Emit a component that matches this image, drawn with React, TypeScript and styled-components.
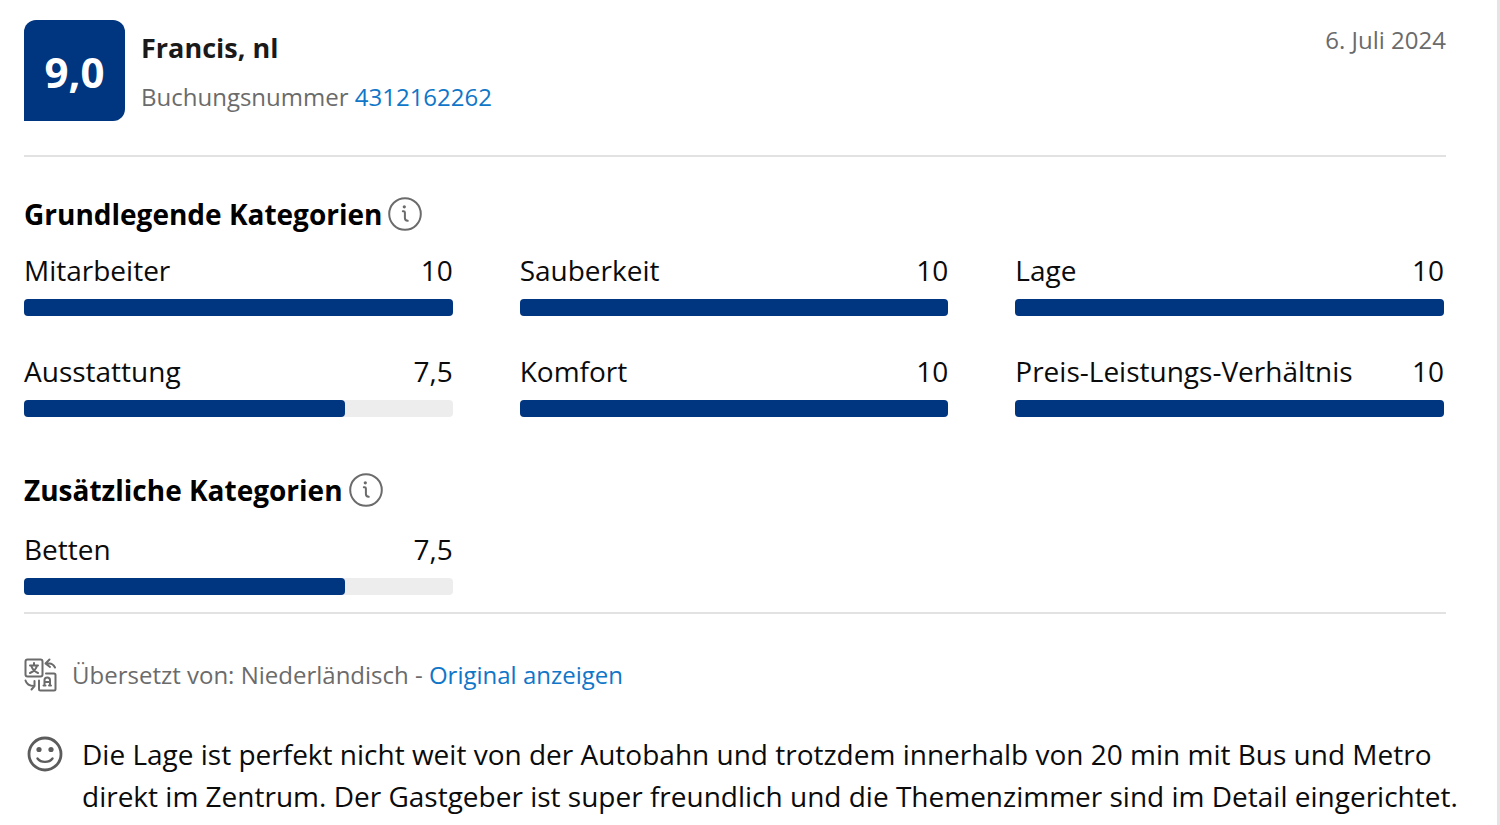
import React from "react";
import styled, { createGlobalStyle } from "styled-components";

const GlobalStyle = createGlobalStyle`
  * { box-sizing: border-box; }
  html { background: #fff; }
  body {
    margin: 0;
    overflow-x: hidden;
    font-family: "Segoe UI", "Open Sans", "Noto Sans", sans-serif;
    font-size: 28px;
    line-height: 42px;
    color: #0b0b0b;
  }
`;

const Card = styled.article`
  min-height: 100vh;
  padding: 20px 51px 7px 24px;
  border-right: 3px solid #e4e4e4;
`;

const Header = styled.header`
  display: flex;
  align-items: flex-start;
  gap: 16px;
  padding-bottom: 34px;
  border-bottom: 2px solid #e2e2e2;
`;

const Score = styled.div`
  display: flex;
  flex: none;
  align-items: center;
  justify-content: center;
  width: 101px;
  height: 101px;
  padding-top: 3px;
  border-radius: 12px 12px 12px 0;
  background: #003580;
  color: #fff;
  font-size: 42px;
  font-weight: 700;
`;

const Guest = styled.div`
  flex: 1;
  padding-top: 7px;
`;

const Name = styled.h2`
  margin: 0;
  padding-bottom: 8px;
  font-size: 27px;
  font-weight: 700;
  line-height: 42px;
  color: #1a1a1a;
`;

const Muted = styled.p`
  margin: 0;
  font-size: 24px;
  line-height: 40px;
  color: #6b6b6b;
`;

const Posted = styled.time`
  font-size: 24px;
  line-height: 40px;
  color: #6b6b6b;
`;

const Link = styled.a`
  color: #0f76c8;
  text-decoration: none;
`;

const Section = styled.section<{ $top: number; $gap: number }>`
  display: flex;
  flex-direction: column;
  gap: ${(p) => p.$gap}px;
  padding-top: ${(p) => p.$top}px;
`;

const SectionHead = styled.div`
  display: flex;
  align-items: center;
  gap: 6px;
  height: 34px;
`;

const SectionTitle = styled.h3`
  margin: 0;
  font-size: 28px;
  font-weight: 700;
  color: #000;
`;

const InfoButton = styled.button`
  display: flex;
  padding: 0;
  border: 0;
  background: none;
  color: #6b6b6b;
  cursor: pointer;
`;

const RatingGrid = styled.div`
  display: grid;
  grid-template-columns: repeat(3, 1fr);
  gap: 35px 67px;
  padding-right: 2px;
`;

const RatingItem = styled.div`
  display: flex;
  flex-direction: column;
  gap: 9px;
`;

const RatingLabel = styled.div`
  display: flex;
  justify-content: space-between;
  line-height: 40px;
  white-space: nowrap;
`;

const Track = styled.div`
  height: 17px;
  border-radius: 4px;
  background: #ededed;
`;

const Fill = styled.div`
  height: 100%;
  border-radius: 4px;
  background: #003580;
`;

const Divider = styled.hr`
  height: 2px;
  margin: 17px 0 44px;
  border: 0;
  background: #e2e2e2;
`;

const Translation = styled.div`
  display: flex;
  align-items: center;
  gap: 15px;
  height: 34px;
`;

const Comment = styled.div`
  display: flex;
  gap: 19px;
  margin-right: -24px;
  padding: 41px 0 0 3px;
`;

const CommentIcon = styled.span`
  display: flex;
  flex: none;
  padding-top: 3px;
  color: #5c5c5c;
`;

const CommentText = styled.p`
  margin: 0;
`;

const InfoIcon = () => (
  <svg width="34" height="34" viewBox="0 0 34 34" fill="none" stroke="currentColor" aria-hidden="true">
    <circle cx="17" cy="17" r="15.8" strokeWidth="2" />
    <circle cx="16.300" cy="9.800" r="1.600" fill="currentColor" stroke="none" />
    <path d="M14.800 14.200h.8c.8 0 1.300.5 1.300 1.300v5.500c0 1.700.8 2.600 2.800 2.800" strokeWidth="2" strokeLinecap="round" />
  </svg>
);

const TranslateIcon = () => (
  <svg width="33" height="34" viewBox="0 0 33 34" fill="none" stroke="#6b6b6b" strokeWidth="2" strokeLinecap="round" strokeLinejoin="round" aria-hidden="true">
    <rect x="1.500" y="1.500" width="17" height="17" rx="2" />
    <path d="M6 7.500h8M10 5v2.500M13 7.800c-.8 3-3 5.500-7 7.200M7.500 8.500c1 2.800 3 5 6.500 6.500" />
    <path d="M22 15.500h8c1 0 1.500.6 1.500 1.500v14c0 1-.5 1.500-1.500 1.500H16.500c-1 0-1.500-.5-1.500-1.500v-8.500" />
    <path d="M20.500 27.500v-5.500c0-1.500 1-2.500 2.700-2.500s2.800 1 2.800 2.500v5.500M20.500 24h5.500M19.500 27.500h2M25 27.500h2" />
    <path d="M25.500 1.500l-4 4 4.500 3.500M22 5.500h3.500c2.500 0 4 1.200 5.500 4" />
    <path d="M1.500 22.500c1 3.500 3 5.500 8.500 5.500M7.500 31.500l3-3.500v-5" />
  </svg>
);

const SmileIcon = () => (
  <svg width="36" height="36" viewBox="0 0 36 36" fill="none" stroke="currentColor" aria-hidden="true">
    <circle cx="18" cy="18" r="16" strokeWidth="2.800" />
    <circle cx="12" cy="13.500" r="2.600" fill="currentColor" stroke="none" />
    <circle cx="24" cy="13.500" r="2.600" fill="currentColor" stroke="none" />
    <path d="M10.500 22.500c3.500 4.500 11.500 4.500 15 0" strokeWidth="2.400" strokeLinecap="round" />
  </svg>
);

type Rating = { label: string; value: number };

const basics: Rating[] = [
  { label: "Mitarbeiter", value: 10 },
  { label: "Sauberkeit", value: 10 },
  { label: "Lage", value: 10 },
  { label: "Ausstattung", value: 7.5 },
  { label: "Komfort", value: 10 },
  { label: "Preis-Leistungs-Verhältnis", value: 10 },
];

const extras: Rating[] = [{ label: "Betten", value: 7.5 }];

const Ratings = ({ items }: { items: Rating[] }) => (
  <RatingGrid>
    {items.map(({ label, value }) => (
      <RatingItem key={label}>
        <RatingLabel>
          <span>{label}</span>
          <span>{value.toLocaleString("de-DE")}</span>
        </RatingLabel>
        <Track>
          <Fill style={{ width: `${value * 10}%` }} />
        </Track>
      </RatingItem>
    ))}
  </RatingGrid>
);

const Heading = ({ children }: { children: string }) => (
  <SectionHead>
    <SectionTitle>{children}</SectionTitle>
    <InfoButton type="button" aria-label={children}>
      <InfoIcon />
    </InfoButton>
  </SectionHead>
);

export default function App() {
  return (
    <>
      <GlobalStyle />
      <Card>
        <Header>
          <Score>9,0</Score>
          <Guest>
            <Name>Francis, nl</Name>
            <Muted>
              Buchungsnummer <Link href="#buchung">4312162262</Link>
            </Muted>
          </Guest>
          <Posted dateTime="2024-07-06">6. Juli 2024</Posted>
        </Header>
        <Section $top={40} $gap={19}>
          <Heading>Grundlegende Kategorien</Heading>
          <Ratings items={basics} />
        </Section>
        <Section $top={56} $gap={22}>
          <Heading>Zusätzliche Kategorien</Heading>
          <Ratings items={extras} />
        </Section>
        <Divider />
        <Translation>
          <TranslateIcon />
          <Muted>
            Übersetzt von: Niederländisch - <Link href="#original">Original anzeigen</Link>
          </Muted>
        </Translation>
        <Comment>
          <CommentIcon>
            <SmileIcon />
          </CommentIcon>
          <CommentText>
            Die Lage ist perfekt nicht weit von der Autobahn und trotzdem innerhalb von 20 min mit Bus und Metro
            direkt im Zentrum. Der Gastgeber ist super freundlich und die Themenzimmer sind im Detail eingerichtet.
          </CommentText>
        </Comment>
      </Card>
    </>
  );
}
